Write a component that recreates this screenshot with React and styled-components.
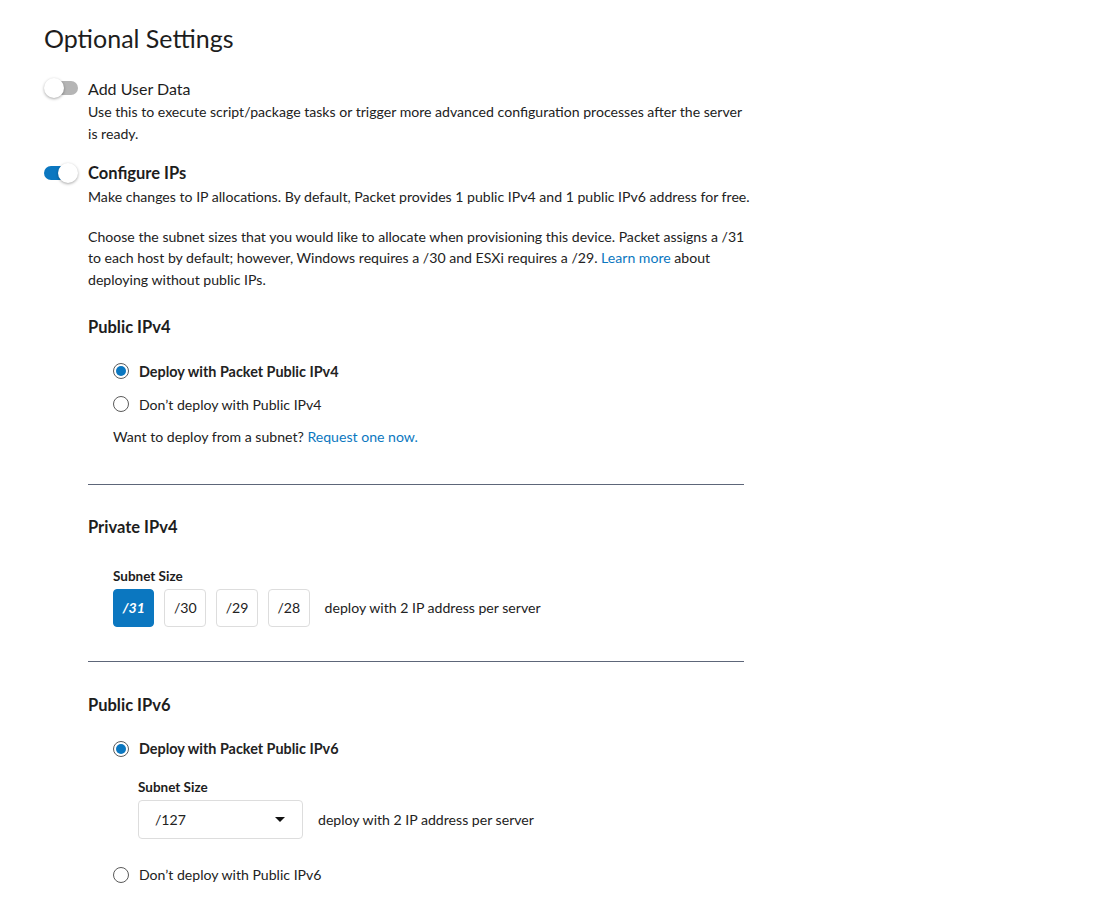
import React from 'react';
import styled, { createGlobalStyle } from 'styled-components';

const GlobalStyle = createGlobalStyle`
body {
  margin: 0;
  background: #fff;
  font-family: Lato, "Liberation Sans", sans-serif;
  color: #222;
}
`

const Page = styled.div`
width: 1094px;
padding: 24px 0 20px 44px;
box-sizing: border-box;
`

const Title = styled.h2`
margin: 0 0 24px 0;
font-size: 25px;
font-weight: 400;
line-height: 28px;
color: #1d1d1d;
`

const Setting = styled.div`
margin-bottom: 17px;
`

const SettingHead = styled.div`
display: flex;
align-items: center;
gap: 10px;
height: 24px;
`

const Track = styled.div`
position: relative;
width: 34px;
height: 20px;
display: flex;
align-items: center;
`

const TrackBar = styled.div`
margin-left: ${p => (p.on ? '0' : '6px')};
width: 28px;
height: 14px;
border-radius: 7px;
background: ${p => (p.on ? '#0b77c0' : '#b5b5b5')};
`

const Knob = styled.div`
position: absolute;
top: 0;
left: ${p => (p.on ? '14px' : '0')};
width: 20px;
height: 20px;
border-radius: 50%;
background: #fff;
box-shadow: 0 1px 3px rgba(0, 0, 0, 0.35);
`

const SettingName = styled.span`
font-size: ${p => (p.bold ? '16.5px' : '16px')};
font-weight: ${p => (p.bold ? 700 : 400)};
color: #1d1d1d;
`

const Body = styled.div`
margin-left: 44px;
width: 668px;
padding-top: 1px;
`

const Text = styled.p`
margin: ${p => p.mt || 0}px 0 0 0;
max-width: ${p => p.w || 668}px;
font-size: 14.1px;
line-height: 21.5px;
color: #222;
`

const Link = styled.a`
color: #0b77c0;
text-decoration: none;
`

const SectionTitle = styled.h4`
margin: 0;
font-size: 16.5px;
font-weight: 700;
line-height: 20px;
color: #1d1d1d;
`

const Section = styled.div`
padding-top: ${p => p.pt}px;
`

const Indent = styled.div`
margin-left: 25px;
`

const RadioRow = styled.label`
display: flex;
align-items: center;
gap: 10px;
height: 20px;
font-size: ${p => (p.checked ? '14.4px' : '14.1px')};
font-weight: ${p => (p.checked ? 700 : 400)};
color: #222;
margin-top: ${p => p.mt || 0}px;
`

const Radio = styled.span`
width: 16px;
height: 16px;
border-radius: 50%;
border: 1px solid #5a5a5a;
box-sizing: border-box;
display: flex;
align-items: center;
justify-content: center;
background: #fff;
&::after {
  content: '';
  display: ${p => (p.checked ? 'block' : 'none')};
  width: 10px;
  height: 10px;
  border-radius: 50%;
  background: #0b77c0;
}
`

const Divider = styled.hr`
margin: 0;
border: 0;
border-top: 1px solid #5d6679;
width: 656px;
`

const FieldLabel = styled.div`
font-size: 13.5px;
font-weight: 700;
line-height: 16px;
color: #1d1d1d;
margin-bottom: 5px;
`

const SizeRow = styled.div`
display: flex;
align-items: center;
gap: 10px;
`

const SizeButton = styled.button`
height: 38px;
padding: 0 8.5px;
min-width: 40px;
border-radius: 4px;
border: 1px solid ${p => (p.active ? '#0b77c0' : '#ddd')};
background: ${p => (p.active ? '#0b77c0' : '#fff')};
color: ${p => (p.active ? '#fff' : '#222')};
font-family: Lato, "Liberation Sans", sans-serif;
font-size: 14.1px;
font-weight: ${p => (p.active ? 700 : 400)};
font-style: ${p => (p.active ? 'italic' : 'normal')};
`

const Hint = styled.span`
margin-left: 5px;
font-size: 14.1px;
color: #222;
`

const Select = styled.div`
width: 165px;
height: 39px;
box-sizing: border-box;
border: 1px solid #ddd;
border-radius: 4px;
display: flex;
align-items: center;
justify-content: space-between;
padding: 0 17px 0 16px;
font-size: 14.1px;
color: #222;
`

const Caret = styled.span`
width: 0;
height: 0;
border-left: 5px solid transparent;
border-right: 5px solid transparent;
border-top: 5px solid #111;
`

const Toggle = ({ on }) => (
  <Track>
    <TrackBar on={on} />
    <Knob on={on} />
  </Track>
)

const App = () => {
  return (
    <Page>
      <GlobalStyle />
      <Title>Optional Settings</Title>

      <Setting>
        <SettingHead>
          <Toggle on={false} />
          <SettingName>Add User Data</SettingName>
        </SettingHead>
        <Body>
          <Text w={656}>
            Use this to execute script/package tasks or trigger more advanced configuration processes after the server is ready.
          </Text>
        </Body>
      </Setting>

      <Setting>
        <SettingHead>
          <Toggle on />
          <SettingName bold>Configure IPs</SettingName>
        </SettingHead>
        <Body>
          <Text>
            Make changes to IP allocations. By default, Packet provides 1 public IPv4 and 1 public IPv6 address for free.
          </Text>
          <Text mt={18}>
            Choose the subnet sizes that you would like to allocate when provisioning this device. Packet assigns a /31 to each host by default; however, Windows requires a /30 and ESXi requires a /29. <Link href="#">Learn more</Link> about deploying without public IPs.
          </Text>

          <Section pt={27}>
            <SectionTitle>Public IPv4</SectionTitle>
            <Indent>
              <RadioRow checked mt={24}>
                <Radio checked />
                Deploy with Packet Public IPv4
              </RadioRow>
              <RadioRow mt={13}>
                <Radio />
                Don’t deploy with Public IPv4
              </RadioRow>
              <Text mt={12}>
                Want to deploy from a subnet? <Link href="#">Request one now.</Link>
              </Text>
            </Indent>
          </Section>

          <Section pt={36}>
            <Divider />
          </Section>

          <Section pt={32}>
            <SectionTitle>Private IPv4</SectionTitle>
            <Indent>
              <Section pt={31}>
                <FieldLabel>Subnet Size</FieldLabel>
                <SizeRow>
                  <SizeButton active>/31</SizeButton>
                  <SizeButton>/30</SizeButton>
                  <SizeButton>/29</SizeButton>
                  <SizeButton>/28</SizeButton>
                  <Hint>deploy with 2 IP address per server</Hint>
                </SizeRow>
              </Section>
            </Indent>
          </Section>

          <Section pt={34}>
            <Divider />
          </Section>

          <Section pt={33}>
            <SectionTitle>Public IPv6</SectionTitle>
            <Indent>
              <RadioRow checked mt={24}>
                <Radio checked />
                Deploy with Packet Public IPv6
              </RadioRow>
              <Indent>
                <Section pt={20}>
                  <FieldLabel>Subnet Size</FieldLabel>
                  <SizeRow>
                    <Select>
                      /127
                      <Caret />
                    </Select>
                    <Hint>deploy with 2 IP address per server</Hint>
                  </SizeRow>
                </Section>
              </Indent>
              <RadioRow mt={26}>
                <Radio />
                Don’t deploy with Public IPv6
              </RadioRow>
            </Indent>
          </Section>
        </Body>
      </Setting>
    </Page>
  )
}

export default App
